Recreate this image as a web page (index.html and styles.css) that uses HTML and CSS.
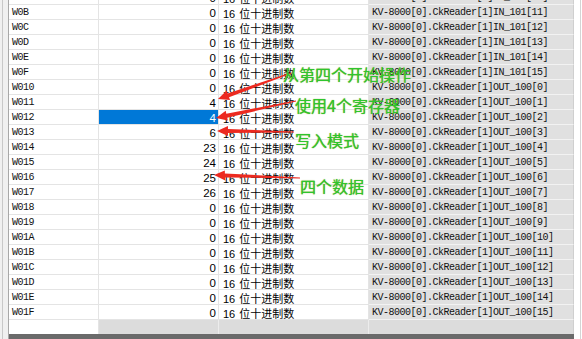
FILE: index.html
```html
<!DOCTYPE html>
<html>
<head>
<meta charset="utf-8">
<link rel="stylesheet" href="styles.css">
</head>
<body>
<div class="frame">
  <div class="gutter"></div>
  <div class="sheet">
    <div class="rows">
      <div class="row"><div class="c addr">W0A</div><div class="c val">0</div><div class="c type">16 <span class="cjk">位十进制数</span></div><div class="c cmt">KV-8000[0].CkReader[1]IN_101[10]</div></div>
      <div class="row"><div class="c addr">W0B</div><div class="c val">0</div><div class="c type">16 <span class="cjk">位十进制数</span></div><div class="c cmt">KV-8000[0].CkReader[1]IN_101[11]</div></div>
      <div class="row"><div class="c addr">W0C</div><div class="c val">0</div><div class="c type">16 <span class="cjk">位十进制数</span></div><div class="c cmt">KV-8000[0].CkReader[1]IN_101[12]</div></div>
      <div class="row"><div class="c addr">W0D</div><div class="c val">0</div><div class="c type">16 <span class="cjk">位十进制数</span></div><div class="c cmt">KV-8000[0].CkReader[1]IN_101[13]</div></div>
      <div class="row"><div class="c addr">W0E</div><div class="c val">0</div><div class="c type">16 <span class="cjk">位十进制数</span></div><div class="c cmt">KV-8000[0].CkReader[1]IN_101[14]</div></div>
      <div class="row"><div class="c addr">W0F</div><div class="c val">0</div><div class="c type">16 <span class="cjk">位十进制数</span></div><div class="c cmt">KV-8000[0].CkReader[1]IN_101[15]</div></div>
      <div class="row"><div class="c addr">W010</div><div class="c val">0</div><div class="c type">16 <span class="cjk">位十进制数</span></div><div class="c cmt">KV-8000[0].CkReader[1]OUT_100[0]</div></div>
      <div class="row"><div class="c addr">W011</div><div class="c val">4</div><div class="c type">16 <span class="cjk">位十进制数</span></div><div class="c cmt">KV-8000[0].CkReader[1]OUT_100[1]</div></div>
      <div class="row"><div class="c addr">W012</div><div class="c val sel">4</div><div class="c type">16 <span class="cjk">位十进制数</span></div><div class="c cmt">KV-8000[0].CkReader[1]OUT_100[2]</div></div>
      <div class="row"><div class="c addr">W013</div><div class="c val">6</div><div class="c type">16 <span class="cjk">位十进制数</span></div><div class="c cmt">KV-8000[0].CkReader[1]OUT_100[3]</div></div>
      <div class="row"><div class="c addr">W014</div><div class="c val">23</div><div class="c type">16 <span class="cjk">位十进制数</span></div><div class="c cmt">KV-8000[0].CkReader[1]OUT_100[4]</div></div>
      <div class="row"><div class="c addr">W015</div><div class="c val">24</div><div class="c type">16 <span class="cjk">位十进制数</span></div><div class="c cmt">KV-8000[0].CkReader[1]OUT_100[5]</div></div>
      <div class="row"><div class="c addr">W016</div><div class="c val">25</div><div class="c type">16 <span class="cjk">位十进制数</span></div><div class="c cmt">KV-8000[0].CkReader[1]OUT_100[6]</div></div>
      <div class="row"><div class="c addr">W017</div><div class="c val">26</div><div class="c type">16 <span class="cjk">位十进制数</span></div><div class="c cmt">KV-8000[0].CkReader[1]OUT_100[7]</div></div>
      <div class="row"><div class="c addr">W018</div><div class="c val">0</div><div class="c type">16 <span class="cjk">位十进制数</span></div><div class="c cmt">KV-8000[0].CkReader[1]OUT_100[8]</div></div>
      <div class="row"><div class="c addr">W019</div><div class="c val">0</div><div class="c type">16 <span class="cjk">位十进制数</span></div><div class="c cmt">KV-8000[0].CkReader[1]OUT_100[9]</div></div>
      <div class="row"><div class="c addr">W01A</div><div class="c val">0</div><div class="c type">16 <span class="cjk">位十进制数</span></div><div class="c cmt">KV-8000[0].CkReader[1]OUT_100[10]</div></div>
      <div class="row"><div class="c addr">W01B</div><div class="c val">0</div><div class="c type">16 <span class="cjk">位十进制数</span></div><div class="c cmt">KV-8000[0].CkReader[1]OUT_100[11]</div></div>
      <div class="row"><div class="c addr">W01C</div><div class="c val">0</div><div class="c type">16 <span class="cjk">位十进制数</span></div><div class="c cmt">KV-8000[0].CkReader[1]OUT_100[12]</div></div>
      <div class="row"><div class="c addr">W01D</div><div class="c val">0</div><div class="c type">16 <span class="cjk">位十进制数</span></div><div class="c cmt">KV-8000[0].CkReader[1]OUT_100[13]</div></div>
      <div class="row"><div class="c addr">W01E</div><div class="c val">0</div><div class="c type">16 <span class="cjk">位十进制数</span></div><div class="c cmt">KV-8000[0].CkReader[1]OUT_100[14]</div></div>
      <div class="row"><div class="c addr">W01F</div><div class="c val">0</div><div class="c type">16 <span class="cjk">位十进制数</span></div><div class="c cmt">KV-8000[0].CkReader[1]OUT_100[15]</div></div>
      <div class="row row-empty"><div class="c addr"></div><div class="c val"></div><div class="c type"></div><div class="c cmt"></div></div>
    </div>
    <div class="statusbar"></div>
  </div>
  <div class="rstrip"></div>
</div>

<svg class="arrows" width="582" height="339" viewBox="0 0 582 339">
  <polygon points="290.83,72.53 227.69,93.43 226.68,90.6 218,99 230.04,100.02 229.03,97.19 291.17,73.47"/>
  <polygon points="295.90,100.51 226.34,113.75 225.72,110.82 216,118 227.80,120.60 227.18,117.67 296.10,101.49"/>
  <polygon points="294,131.5 228,129.1 228,126.1 217,131 228,136.1 228,133.1 294,132.5"/>
  <polygon points="300,177.5 224.9,173.4 224.8,170.4 214,175 225.2,180.4 225.1,177.4 300,178.5"/>
</svg>

<div class="note note1">从第四个开始操作</div>
<div class="note note2">使用4个寄存器</div>
<div class="note note3">写入模式</div>
<div class="note note4">四个数据</div>
</body>
</html>
```
FILE: styles.css
```css
html, body {
  margin: 0;
  padding: 0;
  background: #ffffff;
  overflow: hidden;
}

*, *::before, *::after {
  box-sizing: border-box;
}

.frame {
  display: flex;
  width: 582px;
  height: 339px;
  overflow: hidden;
}

.gutter {
  width: 9px;
  flex: none;
  background: #f0f0f0;
  border-right: 1px solid #a8a8a8;
  box-shadow: inset 2px 0 0 #f0f0f0, inset 3px 0 0 #c8c8c8;
}

.sheet {
  width: 565px;
  flex: none;
  display: flex;
  flex-direction: column;
  overflow: hidden;
}

.rows {
  margin-top: -10px;
  display: flex;
  flex-direction: column;
}

.row {
  display: grid;
  grid-template-columns: 90px 120px 150px 205px;
}

.c {
  height: 15px;
  padding-top: 2px;
  border-right: 1px solid #e4e4e4;
  border-bottom: 1px solid #e4e4e4;
  white-space: nowrap;
  overflow: hidden;
  color: #000;
}

.addr, .cmt {
  font-family: "Liberation Mono", monospace;
  font-size: 10px;
  letter-spacing: -0.5px;
  line-height: 12px;
  padding-left: 3px;
  color: #111;
}

.cmt {
  background: #e0e0e0;
  border-bottom-color: #f2f2f2;
  border-right-color: #cfcfcf;
}

.val {
  font-family: "Liberation Sans", sans-serif;
  font-size: 11.5px;
  line-height: 12px;
  text-align: right;
  padding-right: 2px;
}

.val.sel {
  background: #0078d7;
  color: #ffffff;
}

.type {
  font-family: "Liberation Sans", sans-serif;
  font-size: 11px;
  line-height: 12px;
  padding-left: 4px;
}

.cjk {
  font-family: "Noto Sans CJK SC", sans-serif;
  font-size: 11px;
  margin-left: 1px;
}

.row-empty .c {
  height: 14px;
  padding-top: 0;
  background: #dcdcdc;
  border-bottom: none;
  border-right-color: #ececec;
}

.row-empty .addr {
  background: #ffffff;
  border-right-color: #e4e4e4;
}

.row-empty .cmt {
  border-right-color: #cfcfcf;
}

.statusbar {
  height: 5px;
  background: #6a6a6a;
}

.rstrip {
  flex: 1;
  background: #ffffff;
  border-right: 1px solid #d4d4d4;
  margin-right: 1px;
}

.arrows {
  position: absolute;
  left: 0;
  top: 0;
  pointer-events: none;
}

.arrows polygon {
  fill: #ec2a20;
}

.note {
  position: absolute;
  font-family: "Noto Sans CJK SC", sans-serif;
  font-size: 16px;
  line-height: 16px;
  color: #2ec52e;
  white-space: nowrap;
  text-shadow: 0 0 1px #7a9a10;
}

.note1 { left: 283px; top: 66px; }
.note2 { left: 295px; top: 97px; }
.note3 { left: 295px; top: 132px; }
.note4 { left: 300px; top: 178px; }
```
